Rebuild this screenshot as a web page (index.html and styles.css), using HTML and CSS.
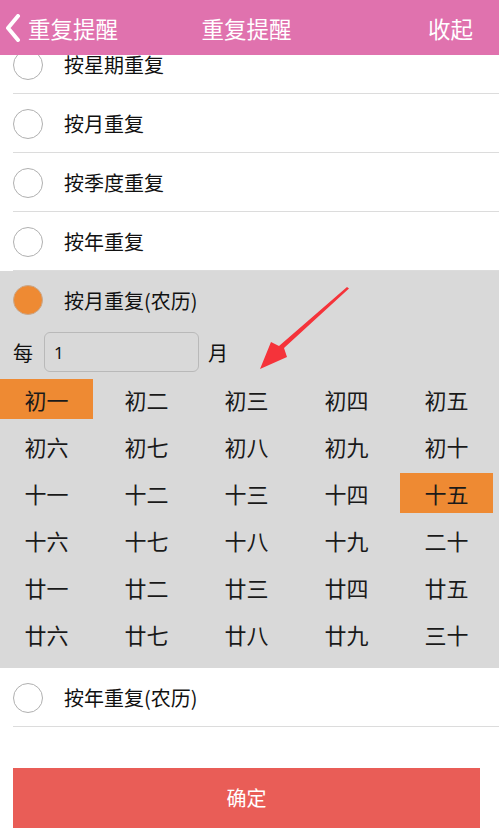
FILE: index.html
```html
<html>
<head>
  <title>重复提醒</title>
  <meta name="viewport" content="width=device-width, minimum-scale=1.0"/>
  <meta http-equiv="Content-Type" content="text/html; charset=utf-8">
  <link rel="stylesheet" href="styles.css">
</head>
<body>
  <div class="header">
    <a class="back">
      <svg class="back-icon" width="16" height="28" viewBox="0 0 16 28">
        <path d="M13 2 L3 14 L13 26" fill="none" stroke="#fff" stroke-width="4" stroke-linecap="round" stroke-linejoin="round"/>
      </svg>
      <span>重复提醒</span>
    </a>
    <div class="title">重复提醒</div>
    <a class="collapse">收起</a>
  </div>
  <div class="scroll">
    <ul class="option-list">
      <li class="option first"><span class="radio"></span><span class="label">按星期重复</span></li>
      <li class="option"><span class="radio"></span><span class="label">按月重复</span></li>
      <li class="option"><span class="radio"></span><span class="label">按季度重复</span></li>
      <li class="option"><span class="radio"></span><span class="label">按年重复</span></li>
      <li class="option-open">
        <div class="option-head"><span class="radio checked"></span><span class="label">按月重复(农历)</span></div>
        <div class="every">
          <span>每</span>
          <input class="every-input" type="text" value="1" />
          <span>月</span>
        </div>
        <div class="days">
          <span class="day active">初一</span>
          <span class="day">初二</span>
          <span class="day">初三</span>
          <span class="day">初四</span>
          <span class="day">初五</span>
          <span class="day">初六</span>
          <span class="day">初七</span>
          <span class="day">初八</span>
          <span class="day">初九</span>
          <span class="day">初十</span>
          <span class="day">十一</span>
          <span class="day">十二</span>
          <span class="day">十三</span>
          <span class="day">十四</span>
          <span class="day active">十五</span>
          <span class="day">十六</span>
          <span class="day">十七</span>
          <span class="day">十八</span>
          <span class="day">十九</span>
          <span class="day">二十</span>
          <span class="day">廿一</span>
          <span class="day">廿二</span>
          <span class="day">廿三</span>
          <span class="day">廿四</span>
          <span class="day">廿五</span>
          <span class="day">廿六</span>
          <span class="day">廿七</span>
          <span class="day">廿八</span>
          <span class="day">廿九</span>
          <span class="day">三十</span>
        </div>
        <svg class="arrow" width="100" height="90" viewBox="0 0 100 90">
          <path d="M89 0 L91 1.5 L26 61 L29 70 L2 82 L13 55 L21 59 Z" fill="#f5333a"/>
        </svg>
      </li>
      <li class="option"><span class="radio"></span><span class="label">按年重复(农历)</span></li>
    </ul>
    <div class="submit-box">
      <a class="submit-btn">确定</a>
    </div>
  </div>
</body>
</html>
```

FILE: styles.css
```css
html {
  font-size: 16px;
  box-sizing: border-box;
}
*, *:before, *:after {
  box-sizing: inherit;
}
body {
  margin: 0;
  padding: 0;
  width: 499px;
  height: 836px;
  overflow: hidden;
  background: #fff;
  color: #111;
  font-family: "Noto Sans CJK SC", "Noto Sans", sans-serif;
}
.header {
  position: relative;
  z-index: 2;
  height: 55px;
  background: #e072ae;
  color: #fff;
  font-size: 22.5px;
  display: grid;
  grid-template-columns: 1fr auto 1fr;
  align-items: center;
  padding: 0 26px 0 5px;
}
.back {
  display: flex;
  align-items: center;
}
.back-icon {
  margin-right: 7px;
}
.title {
  margin-left: 15px;
}
.collapse {
  justify-self: end;
}
.scroll {
  height: 781px;
  overflow: hidden;
}
.option-list {
  list-style: none;
  margin: -20px 0 0;
  padding: 0;
}
.option, .option-head {
  display: flex;
  align-items: center;
  height: 59px;
  padding-left: 13px;
  font-size: 20px;
}
.option {
  position: relative;
}
.option:after {
  content: "";
  position: absolute;
  left: 13px;
  right: 0;
  bottom: 0;
  height: 1px;
  background: #dcdcdc;
}
.option-head {
  height: 58px;
}
.radio {
  width: 30px;
  height: 30px;
  border: 1.5px solid #b0b0b0;
  border-radius: 50%;
  margin-right: 21px;
  background: #fff;
}
.radio.checked {
  background: #ee8a33;
  border-color: #c9a88c;
}
.option-open {
  position: relative;
  background: #d9d9d9;
  padding-bottom: 14px;
}
.every {
  display: flex;
  align-items: center;
  padding: 3px 0 0 13px;
  font-size: 20px;
}
.every-input {
  width: 155px;
  height: 40px;
  margin: 0 9px 0 11px;
  padding: 0 9px;
  border: 1px solid #b9b9b9;
  border-radius: 6px;
  background: #d9d9d9;
  font-family: "Noto Sans", sans-serif;
  font-size: 17px;
  color: #111;
  outline: none;
}
.days {
  display: grid;
  grid-template-columns: repeat(5, 93px);
  column-gap: 7px;
  row-gap: 7px;
  margin-top: 7px;
}
.day {
  height: 40px;
  line-height: 40px;
  text-align: center;
  font-size: 22px;
  color: #1a1a1a;
}
.day.active {
  background: #ee8a33;
}
.arrow {
  position: absolute;
  left: 258px;
  top: 16px;
}
.submit-box {
  padding: 41px 19px 0 13px;
}
.submit-btn {
  display: block;
  height: 60px;
  line-height: 60px;
  text-align: center;
  background: #e95d57;
  color: #fff;
  font-size: 20px;
}
```
